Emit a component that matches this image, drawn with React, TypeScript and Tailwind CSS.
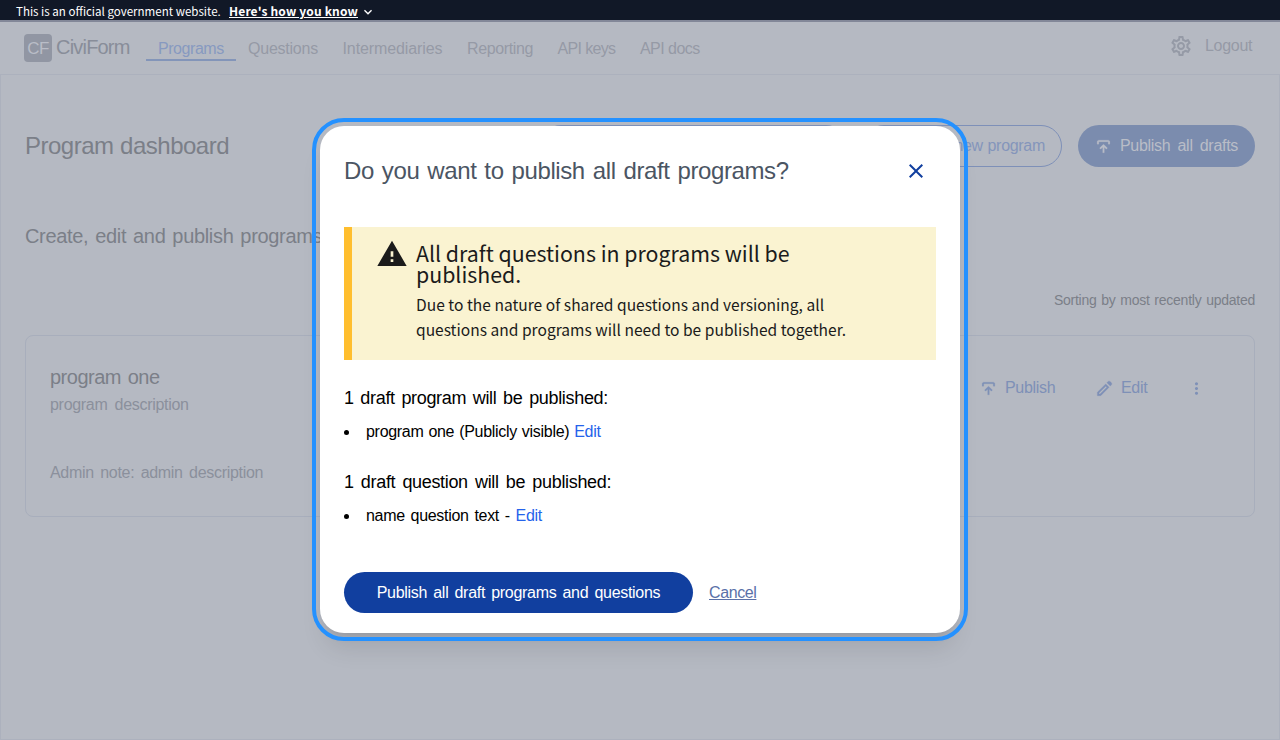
import { MdClose, MdExpandMore, MdMoreVert, MdOutlineSettings, MdWarning } from "react-icons/md";

function PublishIcon() {
  return (
    <svg viewBox="0 0 24 24" fill="currentColor" className="size-[19px] shrink-0">
      <path d="M11 20v-7.2l-2.6 2.6L7 14l5-5 5 5-1.4 1.4-2.6-2.6V20h-2ZM4 9V6q0-.8.6-1.4T6 4h12q.8 0 1.4.6T20 6v3h-2V6H6v3H4Z" stroke="currentColor" strokeWidth="0.25" />
    </svg>
  );
}

function EditIcon() {
  return (
    <svg viewBox="0 0 24 24" fill="currentColor" className="size-[19px] shrink-0">
      <path d="M5 19h1.4l8.6-8.6L13.6 9 5 17.6V19ZM19.3 8.9 15 4.7l1.4-1.4q.6-.6 1.4-.6t1.4.6l1.4 1.4q.6.6.6 1.4t-.6 1.4l-1.3 1.4ZM17.8 10.4 7.3 21H3v-4.3L13.6 6.2l4.2 4.2Z" stroke="currentColor" strokeWidth="0.4" />
    </svg>
  );
}

function GovBanner() {
  return (
    <header className="flex h-[22px] shrink-0 items-start border-b-2 border-[#828798] bg-[#111827] pl-4 font-['Noto_Sans_CJK_JP',sans-serif] tracking-normal text-white">
      <span className="h-5 w-[213px] text-[11.55px] leading-[23px] whitespace-nowrap">This is an official government website.</span>
      <span className="text-[12px] leading-[22px] font-bold tracking-[0.16px] whitespace-nowrap underline">Here's how you know</span>
      <MdExpandMore className="mt-1 ml-[2px] size-4" />
    </header>
  );
}

const links = [
  { label: "Questions", style: "w-[94.5px] tracking-[-0.23px]" },
  { label: "Intermediaries", style: "w-[124.5px] tracking-[-0.1px]" },
  { label: "Reporting", style: "w-[90.5px] tracking-[-0.37px]" },
  { label: "API keys", style: "w-[82.5px] tracking-[-0.65px]" },
  { label: "API docs", style: "w-[82px] tracking-[-0.55px]" },
];

function NavBar() {
  return (
    <nav className="flex h-[52px] shrink-0 items-start pr-7 pl-6 text-[#959aa6]">
      <div className="mt-3 flex size-7 items-center justify-center rounded bg-[#9196a3] pt-px text-[17px] tracking-[-0.6px] text-[#b9bdc7]">CF</div>
      <div className="mt-[11px] ml-1 w-[90px] text-[20px] leading-7 tracking-[-0.8px] text-[#888d99]">CiviForm</div>
      <div className="mt-[15px] h-6 w-[90px] border-b-2 border-[#8395b9] pl-3 leading-6 tracking-[-0.45px] text-[#8799c0]">Programs</div>
      <div className="mt-[15px] ml-3 flex leading-6">
        {links.map((l) => (
          <span key={l.label} className={l.style}>{l.label}</span>
        ))}
      </div>
      <div className="mt-3 ml-auto flex items-center">
        <MdOutlineSettings className="size-6" />
        <span className="ml-3 w-[47px] leading-6">Logout</span>
      </div>
    </nav>
  );
}

function Dashboard() {
  return (
    <main className="grow border border-[#acb1bd] px-6 pt-[50px]">
      <div className="flex h-[42px] items-center gap-4">
        <h1 className="mr-auto text-[24px] tracking-[-0.5px] [word-spacing:0.4px] text-[#7b7f88]">Program dashboard</h1>
        <div className="h-full w-[307px] rounded-full border border-[#7e90b8]" />
        <div className="flex h-full w-[199px] items-center justify-end rounded-full border border-[#7e90b8] pr-4 [word-spacing:0.5px] whitespace-nowrap text-[#8495bb]">Create new program</div>
        <div className="flex h-full w-[177px] items-center rounded-full bg-[#7b8cae] pl-4 text-[#b9bdc7]">
          <PublishIcon />
          <span className="ml-[7px] [word-spacing:3px] whitespace-nowrap">Publish all drafts</span>
        </div>
      </div>
      <p className="mt-[55px] text-[20px] leading-7 tracking-[-0.33px] [word-spacing:1.7px] text-[#7b7f88]">Create, edit and publish programs</p>
      <p className="mt-[40px] text-right text-[14px] leading-5 tracking-[-0.25px] [word-spacing:1.1px] text-[#7b7f88]">Sorting by most recently updated</p>
      <section className="mt-[25px] flex h-[182px] rounded-lg border border-[#a8aebc] px-6 text-[#8b909c]">
        <div>
          <h2 className="mt-[27px] text-[20px] leading-7 tracking-[-0.5px] [word-spacing:1.6px] text-[#7b7f88]">program one</h2>
          <p className="mt-0.5 leading-6 [word-spacing:3px]">program description</p>
          <p className="mt-11 leading-6 [word-spacing:2.2px]">Admin note: admin description</p>
        </div>
        <div className="mt-10 ml-auto flex h-6 items-center text-[#7e90b7]">
          <PublishIcon />
          <span className="ml-[7px] w-[90px]">Publish</span>
          <EditIcon />
          <span className="ml-[7px] w-[66px]">Edit</span>
          <MdMoreVert className="mr-6 size-[19px]" />
        </div>
      </section>
    </main>
  );
}

function PublishModal() {
  return (
    <div role="dialog" className="absolute top-[126.3px] left-[320px] h-[507px] w-[640px] rounded-3xl bg-white px-6 text-black shadow-xl outline-4 outline-offset-4 outline-[#2491ff]">
      <div className="flex items-start pt-[31px]">
        <h2 className="text-[24px] leading-7 tracking-[-0.4px] [word-spacing:1.7px] text-[#4b5563]">Do you want to publish all draft programs?</h2>
        <MdClose className="mt-[1.6px] mr-2 ml-auto size-6 text-[#113f9f]" />
      </div>
      <div className="mt-[41.4px] flex h-[133px] border-l-8 border-[#ffbe2e] bg-[#faf3d1] pl-6 font-['Noto_Sans_CJK_JP',sans-serif] tracking-normal text-[#1b1b1b]">
        <MdWarning className="mt-[11.8px] size-8 shrink-0" />
        <div className="ml-2 pt-[15.8px]">
          <h3 className="w-[380px] text-[21.34px] leading-[21px]">All draft questions in programs will be published.</h3>
          <p className="mt-[8px] w-[440px] text-[15.56px] leading-[25px] [word-spacing:0.1px]">Due to the nature of shared questions and versioning, all questions and programs will need to be published together.</p>
        </div>
      </div>
      <h3 className="mt-[24.6px] text-[18px] leading-7 tracking-[-0.33px] [word-spacing:2px]">1 draft program will be published:</h3>
      <ul className="mt-2 h-12 list-inside list-disc leading-6">
        <li className="[word-spacing:0.8px]">program one (Publicly visible) <a className="text-[#2563eb]">Edit</a></li>
      </ul>
      <h3 className="text-[18px] leading-7 tracking-[-0.33px] [word-spacing:2.5px]">1 draft question will be published:</h3>
      <ul className="mt-2 h-[67.3px] list-inside list-disc leading-6">
        <li className="[word-spacing:1.6px]">name question text - <a className="text-[#2563eb]">Edit</a></li>
      </ul>
      <div className="flex items-center gap-4">
        <button className="h-[41.5px] w-[349px] rounded-full bg-[#113f9f] pt-0.5 [word-spacing:2px] text-white">Publish all draft programs and questions</button>
        <button className="pt-0.5 tracking-[-0.4px] text-[#5a70a8] underline">Cancel</button>
      </div>
    </div>
  );
}

export default function App() {
  return (
    <div className="relative flex h-[740px] w-[1280px] flex-col overflow-hidden bg-[#b5b9c2] font-['Liberation_Sans',Arial,sans-serif] text-[16px] tracking-[-0.3px]">
      <GovBanner />
      <NavBar />
      <Dashboard />
      <PublishModal />
    </div>
  );
}
